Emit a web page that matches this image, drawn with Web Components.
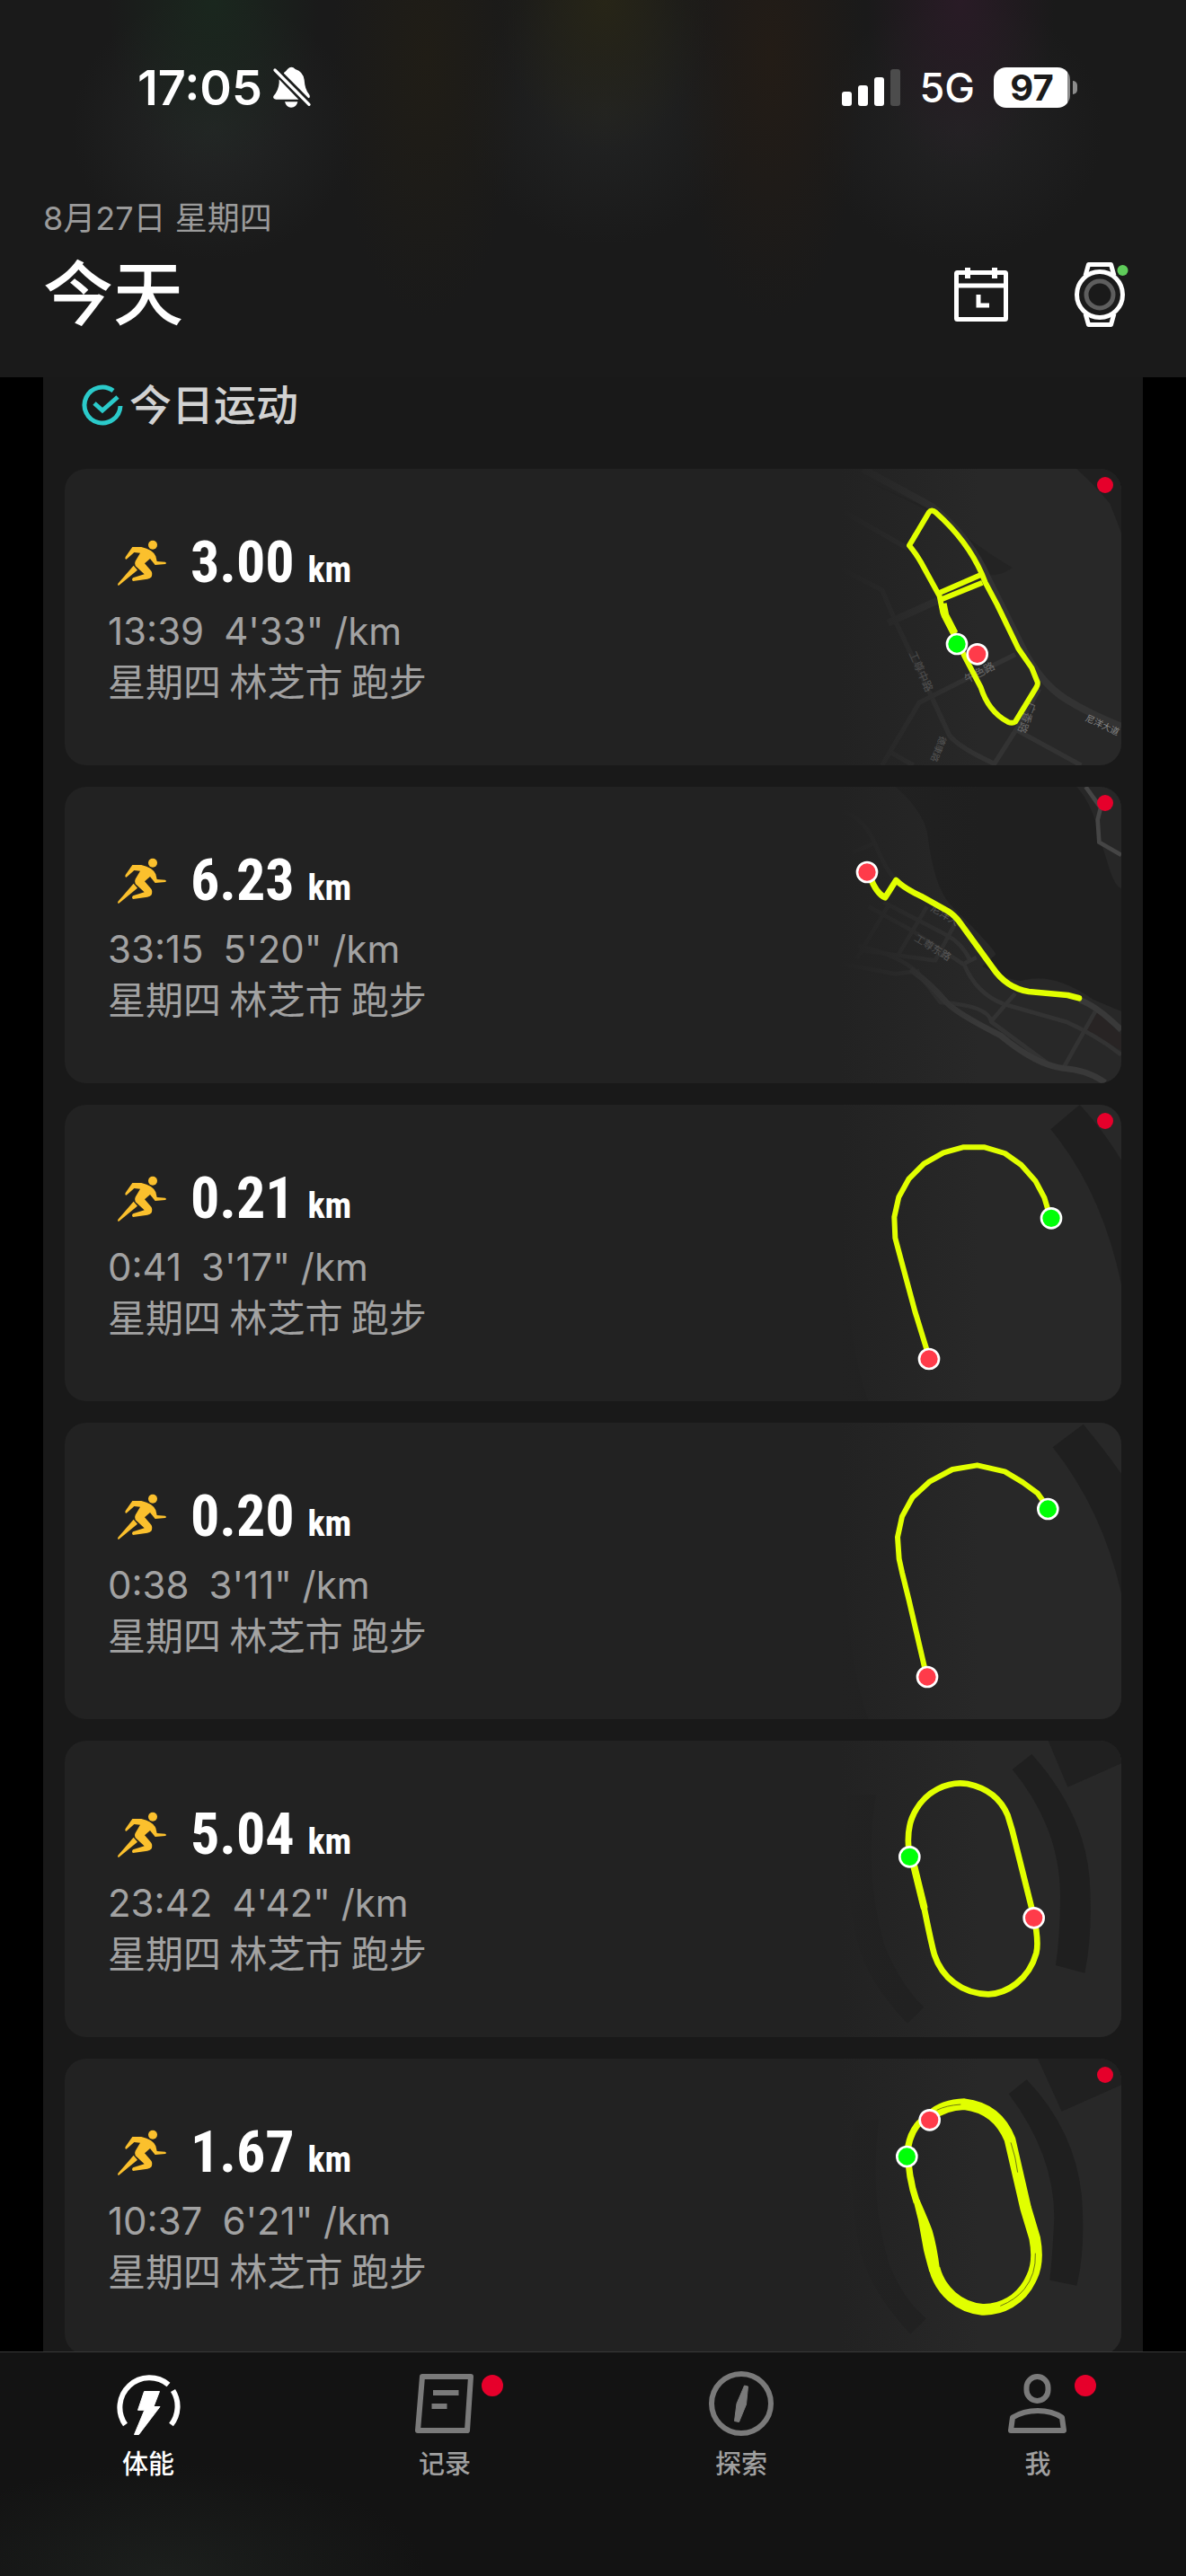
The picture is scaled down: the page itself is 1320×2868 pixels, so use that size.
<!DOCTYPE html>
<html lang="zh-CN">
<head>
<meta charset="utf-8">
<meta name="viewport" content="width=device-width, initial-scale=1">
<title>今天</title>
<style>
  body {
    margin: 0;
    background: #000;
    color: #fff;
    font-family: Inter, "Noto Sans CJK SC", sans-serif;
  }
</style>
</head>
<body>
<fitness-app>
  <app-header slot="header" date="8月27日 星期四" heading="今天">
    <status-bar slot="status" time="17:05" network="5G" battery="97"></status-bar>
  </app-header>

  <workout-section>
    <span slot="title">今日运动</span>
    <run-card route="town-loop" unread>
      <span slot="distance">3.00</span><span slot="time">13:39</span><span slot="pace">4'33" /km</span><span slot="place">星期四 林芝市 跑步</span>
    </run-card>
    <run-card route="riverside" unread>
      <span slot="distance">6.23</span><span slot="time">33:15</span><span slot="pace">5'20" /km</span><span slot="place">星期四 林芝市 跑步</span>
    </run-card>
    <run-card route="half-lap" unread>
      <span slot="distance">0.21</span><span slot="time">0:41</span><span slot="pace">3'17" /km</span><span slot="place">星期四 林芝市 跑步</span>
    </run-card>
    <run-card route="half-lap-short">
      <span slot="distance">0.20</span><span slot="time">0:38</span><span slot="pace">3'11" /km</span><span slot="place">星期四 林芝市 跑步</span>
    </run-card>
    <run-card route="track">
      <span slot="distance">5.04</span><span slot="time">23:42</span><span slot="pace">4'42" /km</span><span slot="place">星期四 林芝市 跑步</span>
    </run-card>
    <run-card route="track-wide" unread>
      <span slot="distance">1.67</span><span slot="time">10:37</span><span slot="pace">6'21" /km</span><span slot="place">星期四 林芝市 跑步</span>
    </run-card>
  </workout-section>

  <tab-bar slot="tabs">
    <tab-item icon="energy" active>体能</tab-item>
    <tab-item icon="record" unread>记录</tab-item>
    <tab-item icon="explore">探索</tab-item>
    <tab-item icon="me" unread>我</tab-item>
  </tab-bar>
</fitness-app>

<script>
// small line icons, all drawn in a 72 x 72 box
const ICONS = {
  calendar: `<g fill="none" stroke="currentColor" stroke-width="5">
      <rect x="8.5" y="11.5" width="55" height="52" rx="1"/>
      <path d="M8 26H64M33 36V48H45"/>
      <path d="M21 6V18M51 6V18" stroke-width="6"/>
    </g>`,
  watch: `<g fill="none" stroke="currentColor" stroke-width="5" stroke-linejoin="round">
      <path d="M20 15L23.500 2.500H48.500L52 15M20 57L23.500 69.500H48.500L52 57"/>
      <circle cx="36" cy="36" r="25.500"/>
      <circle cx="36" cy="36" r="15" stroke="#5e5e5e"/>
    </g>
    <circle cx="61.500" cy="9" r="6" fill="#5fcc5a"/>`,
  energy: `<path d="M10.500 59.500A33 33 0 0 1 58.500 15M63.500 21.500A33 33 0 0 1 61.500 59.500" fill="none" stroke="currentColor" stroke-width="6"/>
    <path d="M31.500 22.500H48.500L42 39.500H49L25.500 70.500H20.500L31.800 43.300H24.500Z" fill="currentColor" stroke="currentColor" stroke-linejoin="round"/>`,
  record: `<path d="M11 6H65L61 66H6Z" fill="none" stroke="currentColor" stroke-width="6" stroke-linejoin="round"/>
    <path d="M23 24H51.500M21.500 39H38.500" stroke="currentColor" stroke-width="6"/>`,
  explore: `<circle cx="36" cy="36" r="33" fill="none" stroke="currentColor" stroke-width="6"/>
    <path d="M39.500 16L43.500 17L41.500 37L33.500 56.500L28.500 55.500L31 36Z" fill="currentColor" stroke="currentColor" stroke-linejoin="round"/>`,
  me: `<g fill="none" stroke="currentColor" stroke-width="6" stroke-linejoin="round">
      <rect x="23.500" y="6" width="24" height="27" rx="12"/>
      <path d="M6 66L8 51.500Q20 44 36 44Q52 44 63 51.500L65 66Z"/>
    </g>`
};

// pins at the start and the end of a route
const startPin = (x, y) => `<circle cx="${x}" cy="${y}" r="33" fill="#00ff08" stroke="#fff" stroke-width="8"/>`;
const endPin = (x, y) => `<circle cx="${x}" cy="${y}" r="33" fill="#ff3b4a" stroke="#fff" stroke-width="8"/>`;

// each route has its land and streets (ground), the run itself (line) and the pins
const ROUTES = {
  "town-loop": {
    ground: `
      <path d="M110 0Q260 70 420 140Q560 260 680 330Q640 360 590 355Q530 220 420 150Z" fill="#232323"/>
      <path d="M895 0H1044V215Q1020 150 1005 115Q960 60 895 0Z" fill="#202020"/>
      <g fill="none" stroke="#333" stroke-width="16">
        <path d="M180 0Q310 70 410 125Q540 230 600 370L720 610Q780 720 860 770Q940 820 1044 860" stroke-width="24"/>
        <path d="M120 145L330 265M110 335L245 405L290 510L405 750L470 890Q500 930 620 985L700 860L770 735"/>
        <path d="M265 515L430 440" stroke-width="24"/>
        <path d="M690 620L600 665L370 780Q340 830 245 990M270 945L350 990M690 870L910 990"/>
      </g>
      <g fill="#6c6c6c" font-size="36">
        <text transform="translate(334 616) rotate(66)">工尊中路</text>
        <text transform="translate(528 716) rotate(-27)">午色路</text>
        <text transform="translate(922 840) rotate(25)" font-size="30" fill="#888">尼洋大道</text>
        <text transform="translate(735 776) rotate(110)">广香路</text>
        <text transform="translate(440 890) rotate(112)" font-size="30">德康路</text>
      </g>`,
    line: `
      <path d="M437 425L375 312Q360 285 336 256L402 145Q410 134 425 146Q530 240 578 350L590 380L630 455L700 600L745 665L764 712Q766 720 760 730L690 845Q680 852 665 845Q600 810 575 730L520 625L485 550L448 480Z"/>
      <path d="M437 414L575 354M440 437L580 380"/>
      <path d="M448 450L456 490L487 550" stroke-width="26"/>`,
    pins: startPin(495, 585) + endPin(563, 619)
  },
  "riverside": {
    ground: `
      <path d="M290 0Q395 90 400 180Q420 330 470 390Q620 540 625 560L580 600Q700 660 720 645Q820 620 950 710L1044 750V0H895Q960 60 965 160Q1000 280 1044 340V0Z" fill="#1f1f1f"/>
      <path d="M925 0H1044V340Q1020 330 1000 260L975 180Q950 60 895 0Z" fill="#272727"/>
      <path d="M965 750L1044 830V880L925 815Z" fill="#282424"/>
      <g fill="none" stroke="#333" stroke-width="14">
        <path d="M105 80Q190 100 230 210Q260 280 290 310M145 220L215 190M270 390L160 575M200 400L345 480L520 595Q560 690 650 725L860 785Q960 830 1044 895"/>
        <path d="M105 590L290 625L370 615M165 530Q330 570 380 640L440 720Q600 730 610 785L800 925M250 385L460 495Q510 520 540 580M395 400L300 560M490 455L420 585M560 570L520 590M690 690L612 780M960 745L850 940"/>
        <path d="M170 545L420 580"/>
        <path d="M340 610Q400 650 460 720Q500 760 640 830Q760 930 850 940Q930 945 990 988M905 712Q960 730 1044 812" stroke-width="20" stroke="#393939"/>
        <path d="M925 0L975 70L965 110L970 185L1044 228" stroke="#454545"/>
      </g>
      <g fill="#6c6c6c" font-size="34">
        <text transform="translate(350 512) rotate(31)">工尊东路</text>
        <text transform="translate(405 412) rotate(31)">尼洋大</text>
      </g>`,
    line: `<path d="M205 300Q225 355 255 370Q262 360 292 312Q320 340 375 365L465 415Q490 430 510 460L615 605Q660 672 735 684L865 696L903 706" stroke-width="20" stroke-linecap="round"/>`,
    pins: endPin(195, 285)
  },
  "half-lap": {
    ground: `
      <path d="M905 0L808 82Q980 290 1044 600V185Q980 80 905 0Z" fill="#1f1f1f"/>
      <path d="M0 0H110Q100 740 200 990H0Z" fill="#202020"/>`,
    line: `<path d="M398 830L355 690L320 560L301 490L289 445L286 375L301 308L335 247L385 197L450 160L515 142H588L655 162L710 201L757 254L787 310L805 370"/>`,
    pins: startPin(810, 379) + endPin(402, 849)
  },
  "half-lap-short": {
    ground: `
      <path d="M917 5L815 82Q980 290 1044 570V170Q980 80 917 5Z" fill="#1f1f1f"/>
      <path d="M0 0H110Q100 740 200 990H0Z" fill="#202020"/>`,
    line: `<path d="M390 830L335 593L312 500L302 455L297 382L312 313L347 249L405 196L480 156L563 142L655 163L715 199L764 235L793 275"/>`,
    pins: startPin(799, 288) + endPin(396, 849)
  },
  "track": {
    ground: `
      <path d="M745 45L680 96Q840 290 840 520Q840 650 825 750L922 776Q950 640 938 460Q920 240 745 45Z" fill="#1f1f1f"/>
      <path d="M800 0L865 155L1044 76V0Z" fill="#202020"/>
      <path d="M130 180H225Q180 430 255 690Q310 820 385 890L330 945Q170 780 150 610Q110 400 130 180Z" fill="#202020"/>`,
    line: `<path d="M337 388Q325 310 345 258C385 160 475 135 530 144Q630 165 665 250L680 300L750 580Q770 670 760 710C735 800 660 845 600 847C510 845 445 790 420 715Q410 680 385 555L352 420Z" stroke-width="20"/>
      <path d="M352 420L385 555" stroke-width="24" stroke-linecap="round"/>`,
    pins: startPin(337, 388) + endPin(752, 592)
  },
  "track-wide": {
    ground: `
      <path d="M728 70L668 118Q820 320 820 530Q815 650 805 740L895 758Q925 640 912 460Q890 240 728 70Z" fill="#1f1f1f"/>
      <path d="M765 0L845 176L1044 88V0Z" fill="#202020"/>
      <path d="M150 205H235Q200 460 270 690Q320 810 393 868L340 920Q190 760 165 610Q130 400 150 205Z" fill="#202020"/>`,
    line: `<path d="M403 190Q345 220 332 295Q330 390 361 480" stroke-width="22"/>
      <path d="M410 190Q450 155 520 152Q630 165 672 270L725 500L755 600Q770 680 745 730C710 810 640 840 580 838C500 830 440 775 420 700" stroke-width="38"/>
      <path d="M349 472L370 470Q405 550 413 574Q428 625 438 702L403 712Q390 665 384 640L366 540Z" fill="#e1ff00" stroke="none"/>
      <path d="M428 172Q460 156 508 153M675 280Q692 330 698 380M757 650Q760 720 720 770Q690 806 640 826" stroke="#6d7a10" stroke-width="3"/>`,
    pins: endPin(404, 205) + startPin(328, 327)
  }
};

// page frame: header on top, scrolling list, tabs at the bottom
class FitnessApp extends HTMLElement {
  connectedCallback() {
    const shadow = this.attachShadow({mode: "open"});
    shadow.innerHTML = `
      <style>
        :host {
          display: flex;
          flex-direction: column;
          height: 100vh;
        }
        main {
          flex: 1;
          min-height: 0;
          padding: 0 48px;
          overflow-y: auto;
          scrollbar-width: none;
        }
      </style>
      <slot name="header"></slot>
      <main><slot></slot></main>
      <slot name="tabs"></slot>`;
  }
}
customElements.define("fitness-app", FitnessApp);

class StatusBar extends HTMLElement {
  connectedCallback() {
    const shadow = this.attachShadow({mode: "open"});
    shadow.innerHTML = `
      <style>
        :host {
          display: flex;
          justify-content: space-between;
          align-items: center;
          height: 54px;
          padding: 70px 121px 0 153px;
        }
        div { display: flex; align-items: center; }
        .time { gap: 8px; font-size: 54px; font-weight: 600; }
        .signal { gap: 21px; font-size: 45px; font-weight: 500; }
        svg { display: block; }
        .battery { gap: 3px; }
        .level {
          width: 85px;
          line-height: 45px;
          border-radius: 14px;
          background: linear-gradient(90deg, #fff 96%, #8c8c8c 96%);
          color: #1b1b1b;
          font-size: 40px;
          font-weight: 700;
          text-align: center;
        }
        .nub {
          width: 5px;
          height: 15px;
          border-radius: 0 5px 5px 0;
          background: #8c8c8c;
        }
      </style>
      <div class="time">
        <span>${this.getAttribute("time")}</span>
        <svg width="48" height="48" viewBox="480 42 144 144" role="img" aria-label="静音">
          <path fill="#fff" d="M528 66Q536 60 540 54Q553 40 566 54Q592 62 596 90Q598 122 612 138Q618 148 610 151L528 68Z"/>
          <path fill="#fff" d="M512 88L577 155H502Q490 154 493 144Q510 126 512 100ZM531 163H574Q570 182 552 182Q536 182 531 163Z"/>
          <path d="M497 57L612 172" stroke="#1b1d1c" stroke-width="22"/>
          <path d="M498 57L612 172" stroke="#fff" stroke-width="10" stroke-linecap="round"/>
        </svg>
      </div>
      <div class="signal">
        <svg width="66" height="42" viewBox="0 0 66 42" role="img" aria-label="信号">
          <g fill="#fff">
            <rect x="0" y="26" width="11" height="16" rx="3"/>
            <rect x="18" y="19" width="11" height="23" rx="3"/>
            <rect x="36" y="10" width="11" height="32" rx="3"/>
            <rect x="54" y="1" width="11" height="41" rx="3" fill="#4c4c4c"/>
          </g>
        </svg>
        <span>${this.getAttribute("network")}</span>
        <div class="battery"><span class="level">${this.getAttribute("battery")}</span><span class="nub"></span></div>
      </div>`;
  }
}
customElements.define("status-bar", StatusBar);

class AppHeader extends HTMLElement {
  connectedCallback() {
    const shadow = this.attachShadow({mode: "open"});
    shadow.innerHTML = `
      <style>
        /* faint glow of the coloured rings that scrolled under the bar */
        :host {
          display: block;
          background:
            radial-gradient(ellipse 9% 45% at 18% 0, #1a271e, transparent),
            radial-gradient(ellipse 12% 35% at 18% 34%, #242626, transparent),
            radial-gradient(ellipse 9% 40% at 51% 0, #272517, transparent),
            radial-gradient(ellipse 8% 70% at 36% 15%, #201d16, transparent),
            radial-gradient(ellipse 8% 70% at 65% 15%, #231c16, transparent),
            radial-gradient(ellipse 12% 35% at 51% 30%, #222323, transparent),
            radial-gradient(ellipse 8% 45% at 81% 0, #291b26, transparent),
            radial-gradient(ellipse 12% 35% at 81% 34%, #232324, transparent),
            #1a1a1a;
        }
        p {
          margin: 95px 48px 21px;
          color: #9b9b9b;
          font-size: 36px;
          line-height: 48px;
        }
        .row {
          display: flex;
          justify-content: space-between;
          align-items: center;
          padding: 0 60px 52px 48px;
        }
        h1 {
          margin: 0;
          font-size: 78px;
          font-weight: 500;
          line-height: 80px;
        }
        .actions { display: flex; gap: 60px; }
        button {
          padding: 0;
          border: 0;
          background: none;
          color: #fff;
        }
        svg { display: block; width: 72px; height: 72px; }
      </style>
      <header>
        <slot name="status"></slot>
        <p>${this.getAttribute("date")}</p>
        <div class="row">
          <h1>${this.getAttribute("heading")}</h1>
          <div class="actions">
            <button type="button" aria-label="日历"><svg viewBox="0 0 72 72">${ICONS.calendar}</svg></button>
            <button type="button" aria-label="手表"><svg viewBox="0 0 72 72">${ICONS.watch}</svg></button>
          </div>
        </div>
      </header>`;
  }
}
customElements.define("app-header", AppHeader);

class WorkoutSection extends HTMLElement {
  connectedCallback() {
    const shadow = this.attachShadow({mode: "open"});
    shadow.innerHTML = `
      <style>
        :host { display: block; background: #191919; }
        h2 {
          display: flex;
          align-items: center;
          gap: 6px;
          margin: 0 0 40px;
          padding-left: 42px;
          color: #d2d2d2;
          font-size: 47px;
          font-weight: 500;
          line-height: 62px;
        }
        .list {
          display: flex;
          flex-direction: column;
          gap: 24px;
          padding: 0 24px 24px;
        }
      </style>
      <section>
        <h2>
          <svg width="48" height="48" viewBox="0 0 48 48" fill="none" stroke="#2bcaca" stroke-width="5" aria-hidden="true">
            <path d="M36 8A20 20 0 1 0 44 25M15 22L24 30L41 15"/>
          </svg>
          <slot name="title"></slot>
        </h2>
        <div class="list"><slot></slot></div>
      </section>`;
  }
}
customElements.define("workout-section", WorkoutSection);

class RouteMap extends HTMLElement {
  connectedCallback() {
    const route = ROUTES[this.getAttribute("name")];
    const shadow = this.attachShadow({mode: "open"});
    shadow.innerHTML = `
      <style>
        :host { display: block; }
        svg {
          display: block;
          width: 100%;
          height: 100%;
          font-family: "Noto Sans CJK SC", sans-serif;
        }
      </style>
      <svg viewBox="0 0 1044 990" role="img" aria-label="路线">
        <defs>
          <linearGradient id="fade">
            <stop offset="0.1" stop-color="#222"/>
            <stop offset="0.55" stop-color="#222" stop-opacity="0"/>
          </linearGradient>
        </defs>
        <rect width="1044" height="990" fill="#282828"/>
        ${route.ground}
        <rect width="1044" height="990" fill="url(#fade)"/>
        <g fill="none" stroke="#e1ff00" stroke-width="18" stroke-linejoin="round">${route.line}</g>
        ${route.pins}
      </svg>`;
  }
}
customElements.define("route-map", RouteMap);

class RunCard extends HTMLElement {
  connectedCallback() {
    const shadow = this.attachShadow({mode: "open"});
    shadow.innerHTML = `
      <style>
        :host { display: block; }
        article {
          position: relative;
          display: flex;
          justify-content: space-between;
          align-items: center;
          padding-left: 48px;
          border-radius: 24px;
          background: #222;
          overflow: hidden;
        }
        .distance {
          display: flex;
          align-items: center;
          gap: 20px;
          height: 80px;
          margin-bottom: 8px;
        }
        .distance p {
          font: 700 64px/80px "Liberation Sans Narrow", "Roboto Condensed", "Open Sans Condensed", "DejaVu Sans Condensed", sans-serif;
        }
        .distance small { font-size: 40px; line-height: 40px; }
        p { margin: 0; }
        .stats, .place { color: #a2a2a2; font-size: 42px; line-height: 56px; }
        .stats { display: flex; gap: 22px; }
        .place {
          padding-bottom: 4px;
          font-family: "Noto Sans CJK SC", sans-serif;
          line-height: 52px;
        }
        route-map { width: 348px; height: 330px; }
        .dot {
          position: absolute;
          top: 9px;
          right: 9px;
          width: 18px;
          height: 18px;
          border-radius: 50%;
          background: #e6002b;
        }
      </style>
      <article>
        <div>
          <div class="distance">
            <svg width="72" height="72" viewBox="180 243 216 216" fill="#fbc02d" aria-hidden="true">
              <circle cx="330" cy="290" r="15"/>
              <path d="M262 297H292Q330 305 340 328L344 345L372 347Q378 351 372 354L338 357L321 336L303 352L325 377Q330 384 326 397Q322 402 312 404L264 411Q258 406 264 400L302 388L272 360Q268 352 272 344L288 317L268 315L242 338Q236 338 239 330Z"/>
              <path d="M266 359L279 374L217 425Q211 427 214 419Z"/>
            </svg>
            <p><slot name="distance"></slot> <small>km</small></p>
          </div>
          <p class="stats"><slot name="time"></slot><slot name="pace"></slot></p>
          <p class="place"><slot name="place"></slot></p>
        </div>
        <route-map name="${this.getAttribute("route")}"></route-map>
        ${this.hasAttribute("unread") ? '<span class="dot"></span>' : ""}
      </article>`;
  }
}
customElements.define("run-card", RunCard);

class TabBar extends HTMLElement {
  connectedCallback() {
    const shadow = this.attachShadow({mode: "open"});
    shadow.innerHTML = `
      <style>
        :host {
          display: block;
          border-top: 1px solid #383838;
          background: radial-gradient(ellipse 22% 50% at 14% 100%, #1c1f1d, transparent), #131313;
        }
        nav {
          display: grid;
          grid-auto-flow: column;
          grid-auto-columns: 1fr;
          padding: 21px 0 104px;
        }
      </style>
      <nav><slot></slot></nav>`;
  }
}
customElements.define("tab-bar", TabBar);

class TabItem extends HTMLElement {
  connectedCallback() {
    const shadow = this.attachShadow({mode: "open"});
    shadow.innerHTML = `
      <style>
        :host { display: block; color: #7a7a7a; }
        :host([active]) { color: #fff; }
        a {
          display: flex;
          flex-direction: column;
          align-items: center;
          gap: 12px;
          color: inherit;
          text-decoration: none;
        }
        .icon { position: relative; }
        svg { display: block; width: 72px; height: 72px; }
        .label {
          color: #a0a0a0;
          font-size: 29px;
          font-weight: 500;
          line-height: 40px;
        }
        :host([active]) .label { color: #fff; }
        .dot {
          position: absolute;
          top: 4px;
          right: -29px;
          width: 24px;
          height: 24px;
          border-radius: 50%;
          background: #e6002b;
        }
      </style>
      <a href="#${this.getAttribute("icon")}">
        <span class="icon">
          <svg viewBox="0 0 72 72" aria-hidden="true">${ICONS[this.getAttribute("icon")]}</svg>
          ${this.hasAttribute("unread") ? '<span class="dot"></span>' : ""}
        </span>
        <span class="label"><slot></slot></span>
      </a>`;
  }
}
customElements.define("tab-item", TabItem);
</script>
</body>
</html>
